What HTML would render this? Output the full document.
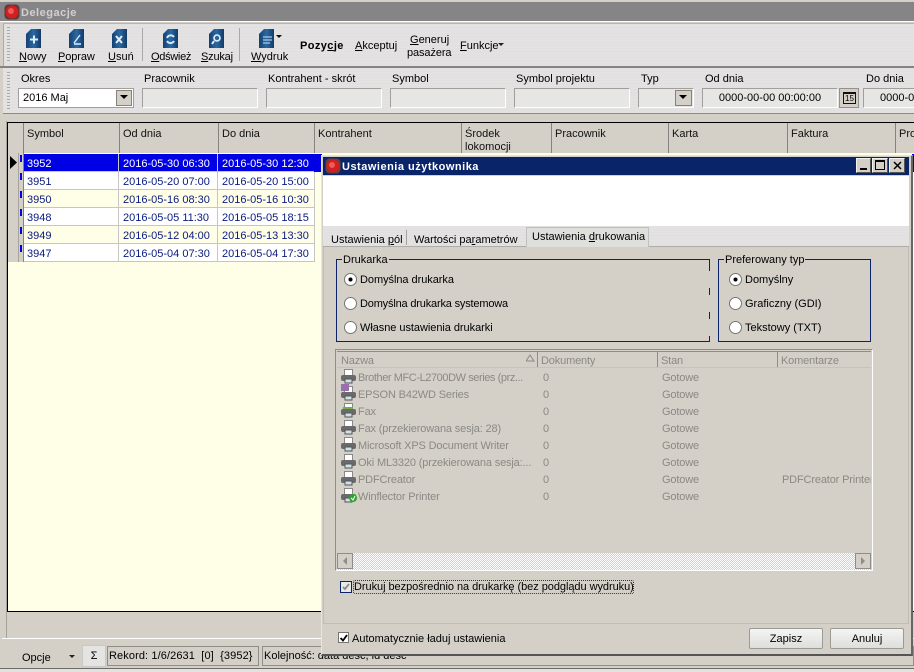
<!DOCTYPE html>
<html lang="pl"><head><meta charset="utf-8"><style>
html,body{margin:0;padding:0}
body{width:914px;height:672px;overflow:hidden;position:relative;background:#d4d0c8;font:11px/15px "Liberation Sans",sans-serif;color:#000}
div,span,svg{position:absolute;white-space:nowrap;box-sizing:border-box}
u{text-decoration:underline}
.metal{background:repeating-linear-gradient(180deg,#e6e4e4 0,#dcdadb 1px,#e9e8e8 2px,#dfdddd 3px)}
.l{font-size:11px}
.inp{height:20px;background:#e6e6e4;border:1px solid #a09f9c;border-right-color:#fff;border-bottom-color:#fff;top:88px}
.h{top:127px;color:#111}
.sep{top:123px;height:30px;width:1px;background:#858380}
.cell{height:18px;border-bottom:1px solid #c6c6c6;border-right:1px solid #c6c6c6;line-height:20px;color:#0a1a80;padding-left:4px;font-size:11px;overflow:hidden}
.rad{width:13px;height:13px;border-radius:50%;background:#fff;border:1px solid #77756f}
.rad.on:after{content:"";position:absolute;left:4px;top:4px;width:3px;height:3px;background:#000;border-radius:50%;box-shadow:0 0 0 .5px #000}
.g{color:#8b8985;letter-spacing:-.15px}
.btn{top:628px;height:21px;width:74px;border:1px solid #9a9a96;border-radius:2px;background:linear-gradient(#f4f4f2,#dededc);text-align:center;line-height:20px}
.tb{text-align:center;top:50px}
</style></head><body>
<!-- title -->
<div style="left:0;top:2px;width:914px;height:19px;background:#858487"></div>
<svg style="left:4px;top:4px" width="16" height="16"><rect x="0.500" y="0.500" width="15" height="15" rx="4" fill="#5a3a3a"/><circle cx="8" cy="8" r="6.500" fill="#d21f1f"/><circle cx="7" cy="7" r="3" fill="#ee5a5a"/></svg>
<div style="left:21px;top:6px;color:#d4d0d0;font-weight:bold;letter-spacing:.5px">Delegacje</div>
<div style="left:0;top:21px;width:914px;height:1px;background:#fff"></div>
<!-- toolbar -->
<div class="metal" style="left:3px;top:23px;width:911px;height:43px;border-top:1px solid #b5b5b3;border-left:1px solid #aaa"></div>
<div style="left:0;top:66px;width:914px;height:2px;background:#858380"></div>
<div style="left:7px;top:27px;width:3px;height:34px;background:repeating-linear-gradient(180deg,#aaa 0,#aaa 1px,transparent 1px,transparent 3px)"></div>
<svg style="left:0;top:28px" width="290" height="24">
<defs><linearGradient id="b" x1="0" x2="1" y1="0" y2="0"><stop offset="0" stop-color="#153f70"/><stop offset=".5" stop-color="#2a6aa5"/><stop offset="1" stop-color="#123a68"/></linearGradient><g id="d"><path d="M5 0H15V19H0V5Z" fill="url(#b)"/></g></defs>
<use href="#d" x="26" y="1"/><path d="M30 11.500H38M34 7.500V15.500" stroke="#dcecf8" stroke-width="2"/>
<use href="#d" x="69" y="1"/><path d="M74 15L80 7M74 16H81" stroke="#dcebf7" stroke-width="1.400" fill="none"/>
<use href="#d" x="112" y="1"/><path d="M116 8L122 15M122 8L116 15" stroke="#e6f0f8" stroke-width="2"/>
<use href="#d" x="163" y="1"/><path d="M167 10A4 4 0 0 1 174 9M174 13A4 4 0 0 1 167 13" stroke="#d5e7f5" stroke-width="2" fill="none"/>
<use href="#d" x="209" y="1"/><circle cx="217" cy="10" r="3" stroke="#e4f0f9" stroke-width="1.600" fill="none"/><path d="M214 13L212 16" stroke="#e4f0f9" stroke-width="2"/>
<use href="#d" x="259" y="1"/><path d="M263 9H272M263 12H272M263 15H270" stroke="#cfe4f5" stroke-width="1"/>
<path d="M276 7H282L279 10Z" fill="#111"/>
</svg>
<div class="tb" style="left:19px"><u>N</u>owy</div>
<div class="tb" style="left:58px;letter-spacing:-.1px"><u>P</u>opraw</div>
<div class="tb" style="left:108px"><u>U</u>suń</div>
<div class="tb" style="left:151px;letter-spacing:-.3px"><u>O</u>dśwież</div>
<div class="tb" style="left:201px;letter-spacing:-.2px"><u>S</u>zukaj</div>
<div class="tb" style="left:251px"><u>W</u>ydruk</div>
<div style="left:142px;top:28px;width:1px;height:33px;background:#a9a9a7"></div>
<div style="left:239px;top:28px;width:1px;height:33px;background:#a9a9a7"></div>
<div style="left:300px;top:39px;font-weight:bold;letter-spacing:.4px">Pozy<u>c</u>je</div>
<div style="left:355px;top:39px"><u>A</u>kceptuj</div>
<div style="left:410px;top:33px"><u>G</u>eneruj</div>
<div style="left:407px;top:46px;letter-spacing:-.1px">pasażera</div>
<div style="left:460px;top:39px"><u>F</u>unkcje</div>
<svg style="left:498px;top:43px" width="7" height="5"><path d="M0 0H6L3 3Z" fill="#222"/></svg>
<!-- filter -->
<div class="metal" style="left:3px;top:68px;width:911px;height:46px;border-bottom:1px solid #8d8b88"></div>
<div style="left:7px;top:72px;width:3px;height:38px;background:repeating-linear-gradient(180deg,#aaa 0,#aaa 1px,transparent 1px,transparent 3px)"></div>
<div class="l" style="left:21px;top:72px">Okres</div>
<div class="l" style="left:144px;top:72px">Pracownik</div>
<div class="l" style="left:268px;top:72px">Kontrahent - skrót</div>
<div class="l" style="left:392px;top:72px">Symbol</div>
<div class="l" style="left:516px;top:72px">Symbol projektu</div>
<div class="l" style="left:641px;top:72px">Typ</div>
<div class="l" style="left:705px;top:72px">Od dnia</div>
<div class="l" style="left:866px;top:72px">Do dnia</div>
<div style="left:18px;top:88px;width:116px;height:20px;background:#fff;border:1px solid #a09f9c;padding:2px 0 0 4px">2016 Maj</div>
<div style="left:116px;top:90px;width:16px;height:16px;background:#d4d0c8;border:1px solid #85827c"></div>
<svg style="left:120px;top:95px" width="9" height="6"><path d="M0 0H8L4 4Z" fill="#000"/></svg>
<div class="inp" style="left:142px;width:116px"></div>
<div class="inp" style="left:266px;width:116px"></div>
<div class="inp" style="left:390px;width:116px"></div>
<div class="inp" style="left:514px;width:116px"></div>
<div class="inp" style="left:638px;width:56px"></div>
<div style="left:675px;top:90px;width:17px;height:16px;background:#d4d0c8;border:1px solid #85827c"></div>
<svg style="left:679px;top:95px" width="9" height="6"><path d="M0 0H8L4 4Z" fill="#000"/></svg>
<div class="inp" style="left:702px;width:136px;text-align:center;line-height:19px">0000-00-00 00:00:00</div>
<div style="left:839px;top:88px;width:20px;height:20px;background:#d4d0c8;border:1px solid #95928d"></div>
<div style="left:843px;top:92px;width:13px;height:12px;border:1px solid #111;border-top-width:2px;font-size:8px;line-height:9px;text-align:center">15</div>
<div class="inp" style="left:863px;width:60px;padding-left:16px;line-height:19px">0000-0</div>
<!-- grid -->
<div style="left:6px;top:121px;width:1px;height:518px;background:#a5a29c"></div>
<div style="left:7px;top:122px;width:907px;height:490px;background:#ffffe8;border:1px solid #000;border-width:1px 0 1px 1px"></div>
<div style="left:8px;top:123px;width:906px;height:30px;background:#d4d0c8"></div>
<div class="sep" style="left:23px"></div><div class="sep" style="left:119px"></div><div class="sep" style="left:218px"></div><div class="sep" style="left:314px"></div><div class="sep" style="left:461px"></div><div class="sep" style="left:551px"></div><div class="sep" style="left:668px"></div><div class="sep" style="left:787px"></div><div class="sep" style="left:895px"></div>
<div class="h" style="left:27px">Symbol</div><div class="h" style="left:123px">Od dnia</div><div class="h" style="left:222px">Do dnia</div><div class="h" style="left:318px">Kontrahent</div><div class="h" style="left:465px">Środek</div><div class="h" style="left:465px;top:140px">lokomocji</div><div class="h" style="left:555px">Pracownik</div><div class="h" style="left:672px">Karta</div><div class="h" style="left:791px">Faktura</div><div class="h" style="left:899px">Pro</div>
<div style="left:8px;top:153px;width:16px;height:109px;background:#d4d0c8;border-right:1px solid #85827c"></div>
<svg style="left:10px;top:156px" width="8" height="13"><path d="M0 0L7 6.500L0 13Z" fill="#000"/></svg>
<div style="left:18px;top:153px;width:1px;height:109px;background:#a5a29c"></div>
<div style="left:20px;top:155px;width:2px;height:7px;background:#0000e0"></div><div style="left:20px;top:173px;width:2px;height:7px;background:#0000e0"></div><div style="left:20px;top:191px;width:2px;height:7px;background:#0000e0"></div><div style="left:20px;top:209px;width:2px;height:7px;background:#0000e0"></div><div style="left:20px;top:227px;width:2px;height:7px;background:#0000e0"></div><div style="left:20px;top:245px;width:2px;height:7px;background:#0000e0"></div>
<div class="cell" style="left:24px;top:154px;width:95px;background:#0000e6;color:#fff;padding-left:3px">3952</div><div class="cell" style="left:119px;top:154px;width:99px;background:#0000e6;color:#fff">2016-05-30 06:30</div><div class="cell" style="left:218px;top:154px;width:97px;background:#0000e6;color:#fff">2016-05-30 12:30</div>
<div class="cell" style="left:24px;top:172px;width:95px;background:#fff;padding-left:3px">3951</div><div class="cell" style="left:119px;top:172px;width:99px;background:#fff">2016-05-20 07:00</div><div class="cell" style="left:218px;top:172px;width:97px;background:#fff">2016-05-20 15:00</div>
<div class="cell" style="left:24px;top:190px;width:95px;padding-left:3px">3950</div><div class="cell" style="left:119px;top:190px;width:99px">2016-05-16 08:30</div><div class="cell" style="left:218px;top:190px;width:97px">2016-05-16 10:30</div>
<div class="cell" style="left:24px;top:208px;width:95px;background:#fff;padding-left:3px">3948</div><div class="cell" style="left:119px;top:208px;width:99px;background:#fff">2016-05-05 11:30</div><div class="cell" style="left:218px;top:208px;width:97px;background:#fff">2016-05-05 18:15</div>
<div class="cell" style="left:24px;top:226px;width:95px;padding-left:3px">3949</div><div class="cell" style="left:119px;top:226px;width:99px">2016-05-12 04:00</div><div class="cell" style="left:218px;top:226px;width:97px">2016-05-13 13:30</div>
<div class="cell" style="left:24px;top:244px;width:95px;background:#fff;padding-left:3px">3947</div><div class="cell" style="left:119px;top:244px;width:99px;background:#fff">2016-05-04 07:30</div><div class="cell" style="left:218px;top:244px;width:97px;background:#fff">2016-05-04 17:30</div>
<div style="left:314px;top:154px;width:8px;height:18px;background:#0000e6"></div>
<div style="left:912px;top:154px;width:2px;height:18px;background:#0000e6"></div>
<!-- status -->
<div style="left:2px;top:638px;width:912px;height:1px;background:#fff"></div>
<div style="left:22px;top:651px;font-size:11px">Opcje</div>
<svg style="left:69px;top:655px" width="7" height="4"><path d="M0 0H6L3 3Z" fill="#222"/></svg>
<div style="left:82px;top:645px;width:24px;height:22px;background:#e4e4e2;border:1px solid #c8c8c6;text-align:center;line-height:20px">Σ</div>
<div style="left:107px;top:646px;width:152px;height:20px;border:1px solid #8f8d89;padding-left:1px;line-height:19px;letter-spacing:.1px">Rekord: 1/6/2631&nbsp; [0]&nbsp; {3952}</div>
<div style="left:262px;top:646px;width:652px;height:20px;border:1px solid #8f8d89;padding-left:1px;line-height:19px">Kolejność: data desc, id desc</div>
<div style="left:0;top:668px;width:914px;height:1px;background:#6d6b68"></div>
<div style="left:0;top:669px;width:914px;height:3px;background:#e4e2de"></div>
<!-- dialog -->
<div style="left:321px;top:155px;width:592px;height:501px;background:#d4d0c8;border:1px solid #e6e4e0;border-right:2px solid #666;border-bottom:2px solid #555"></div>
<div style="left:323px;top:157px;width:586px;height:18px;background:#0a246a"></div>
<svg style="left:325px;top:158px" width="16" height="16"><rect x="0.500" y="0.500" width="15" height="15" rx="4" fill="#6a4040"/><circle cx="8" cy="8" r="6.500" fill="#d21f1f"/><circle cx="7" cy="7" r="3" fill="#ee5a5a"/></svg>
<div style="left:342px;top:160px;color:#fff;font-weight:bold;font-size:11px;letter-spacing:.5px">Ustawienia użytkownika</div>
<div style="left:856px;top:158px;width:15px;height:15px;background:#d4d0c8;border:1px solid #f2f2f0;border-right-color:#555;border-bottom-color:#555"><div style="left:3px;top:9px;width:7px;height:2px;background:#000"></div></div>
<div style="left:872px;top:158px;width:16px;height:15px;background:#d4d0c8;border:1px solid #f2f2f0;border-right-color:#555;border-bottom-color:#555"><div style="left:2px;top:1px;width:10px;height:10px;border:1px solid #000;border-top-width:2px"></div></div>
<div style="left:889px;top:158px;width:16px;height:15px;background:#d4d0c8;border:1px solid #f2f2f0;border-right-color:#555;border-bottom-color:#555"><svg style="left:3px;top:2px" width="9" height="9"><path d="M1 1L8 8M8 1L1 8" stroke="#000" stroke-width="1.500"/></svg></div>
<div style="left:323px;top:176px;width:586px;height:50px;background:#fff"></div>
<div class="metal" style="left:323px;top:226px;width:586px;height:20px"></div>
<div style="left:323px;top:246px;width:586px;height:1px;background:#aeaca8"></div>
<div style="left:323px;top:247px;width:586px;height:377px;border:1px solid #c0bdb7;border-top:none"></div>
<div style="left:331px;top:233px">Ustawienia <u>p</u>ól</div>
<div style="left:406px;top:230px;width:1px;height:15px;background:#a5a39f"></div>
<div style="left:414px;top:233px">Wartości pa<u>r</u>ametrów</div>
<div style="left:526px;top:227px;width:123px;height:20px;background:#dfdfdc;border:1px solid #c0c0bc;border-bottom:none;padding:2px 0 0 5px">Ustawienia <u>d</u>rukowania</div>
<!-- groups -->
<div style="left:336px;top:259px;width:374px;height:83px;border:1px solid #0a246a;border-right:none"></div>
<div style="left:709px;top:259px;width:1px;height:12px;background:#0a246a"></div><div style="left:709px;top:288px;width:1px;height:7px;background:#0a246a"></div><div style="left:709px;top:312px;width:1px;height:7px;background:#0a246a"></div><div style="left:709px;top:336px;width:1px;height:6px;background:#0a246a"></div>
<div style="left:342px;top:253px;background:#d4d0c8;padding:0 1px">Drukarka</div>
<div class="rad on" style="left:344px;top:273px"></div><div style="left:360px;top:273px;letter-spacing:-.05px">Domyślna drukarka</div>
<div class="rad" style="left:344px;top:297px"></div><div style="left:360px;top:297px;letter-spacing:-.18px">Domyślna drukarka systemowa</div>
<div class="rad" style="left:344px;top:321px"></div><div style="left:360px;top:321px;letter-spacing:-.05px">Własne ustawienia drukarki</div>
<div style="left:718px;top:259px;width:153px;height:83px;border:1px solid #0a246a"></div>
<div style="left:724px;top:253px;background:#d4d0c8;padding:0 1px">Preferowany typ</div>
<div class="rad on" style="left:729px;top:273px"></div><div style="left:745px;top:273px">Domyślny</div>
<div class="rad" style="left:729px;top:297px"></div><div style="left:745px;top:297px">Graficzny (GDI)</div>
<div class="rad" style="left:729px;top:321px"></div><div style="left:745px;top:321px">Tekstowy (TXT)</div>
<!-- list -->
<div style="left:335px;top:349px;width:538px;height:222px;border:1px solid #8f8d89;border-right:1px solid #fff;border-bottom:1px solid #fff"></div>
<div style="left:337px;top:351px;width:534px;height:1px;background:#8f8d89"></div>
<div style="left:337px;top:367px;width:534px;height:1px;background:#c5c3bd"></div>
<div style="left:537px;top:352px;width:1px;height:15px;background:#8f8d89"></div><div style="left:657px;top:352px;width:1px;height:15px;background:#8f8d89"></div><div style="left:777px;top:352px;width:1px;height:15px;background:#8f8d89"></div>
<div class="g" style="left:341px;top:354px">Nazwa</div>
<svg style="left:526px;top:354px" width="9" height="9"><path d="M4 1L8 7H0Z" fill="none" stroke="#8b8985"/></svg>
<div class="g" style="left:541px;top:354px">Dokumenty</div><div class="g" style="left:661px;top:354px">Stan</div><div class="g" style="left:781px;top:354px">Komentarze</div>
<svg style="left:340px;top:367px" width="20" height="140">
<defs><g id="p"><rect x="4.500" y="0.500" width="8" height="6" fill="#fff" stroke="#888"/><rect x="1" y="6" width="15" height="6" rx="2" fill="#6a6a6a"/><rect x="5" y="10" width="7" height="4" fill="#cfe0e8" stroke="#555"/></g></defs>
<use href="#p" y="2"/><use href="#p" y="19"/><rect x="1" y="17" width="8" height="7" fill="#9a6fb0"/><use href="#p" y="36"/><rect x="3" y="40" width="10" height="2" fill="#6cb04a"/><use href="#p" y="53"/><use href="#p" y="70"/><use href="#p" y="87"/><use href="#p" y="104"/><use href="#p" y="121"/><circle cx="13" cy="131" r="4" fill="#2da52d"/><path d="M11 131L13 133L15 129" stroke="#fff" fill="none"/>
</svg>
<div class="g" style="left:358px;top:371px;letter-spacing:-.42px">Brother MFC-L2700DW series (prz...</div><div class="g" style="left:543px;top:371px">0</div><div class="g" style="left:662px;top:371px">Gotowe</div>
<div class="g" style="left:358px;top:388px">EPSON B42WD Series</div><div class="g" style="left:543px;top:388px">0</div><div class="g" style="left:662px;top:388px">Gotowe</div>
<div class="g" style="left:358px;top:405px">Fax</div><div class="g" style="left:543px;top:405px">0</div><div class="g" style="left:662px;top:405px">Gotowe</div>
<div class="g" style="left:358px;top:422px">Fax (przekierowana sesja: 28)</div><div class="g" style="left:543px;top:422px">0</div><div class="g" style="left:662px;top:422px">Gotowe</div>
<div class="g" style="left:358px;top:439px">Microsoft XPS Document Writer</div><div class="g" style="left:543px;top:439px">0</div><div class="g" style="left:662px;top:439px">Gotowe</div>
<div class="g" style="left:358px;top:456px">Oki ML3320 (przekierowana sesja:...</div><div class="g" style="left:543px;top:456px">0</div><div class="g" style="left:662px;top:456px">Gotowe</div>
<div class="g" style="left:358px;top:473px">PDFCreator</div><div class="g" style="left:543px;top:473px">0</div><div class="g" style="left:662px;top:473px">Gotowe</div><div class="g" style="left:782px;top:473px;width:89px;overflow:hidden">PDFCreator Printer</div>
<div class="g" style="left:358px;top:490px">Winflector Printer</div><div class="g" style="left:543px;top:490px">0</div><div class="g" style="left:662px;top:490px">Gotowe</div>
<!-- hscroll -->
<div style="left:337px;top:553px;width:534px;height:17px;background:repeating-conic-gradient(#d4d0c8 0 25%,#fff 0 50%) 0 0/2px 2px"></div>
<div style="left:337px;top:553px;width:16px;height:16px;background:#d4d0c8;border:1px solid #8f8d89"></div><svg style="left:342px;top:557px" width="6" height="9"><path d="M5 0V8L1 4Z" fill="#8f8d89"/></svg>
<div style="left:855px;top:553px;width:16px;height:16px;background:#d4d0c8;border:1px solid #8f8d89"></div><svg style="left:861px;top:557px" width="6" height="9"><path d="M0 0V8L4 4Z" fill="#8f8d89"/></svg>
<!-- checks -->
<div style="left:340px;top:581px;width:12px;height:12px;background:#e8e8e6;border:1px solid #0a246a"></div>
<svg style="left:341px;top:582px" width="10" height="10"><path d="M2 5L4 7L8 2" stroke="#8b8985" stroke-width="1.800" fill="none"/></svg>
<div style="left:353px;top:580px;width:281px;height:14px;border:1px dotted #333;border-radius:2px;line-height:12px;letter-spacing:-.05px">Drukuj bezpośrednio na drukarkę (bez podglądu wydruku)</div>
<div style="left:338px;top:632px;width:11px;height:11px;background:#fff;border:1px solid #77756f"></div>
<svg style="left:339px;top:633px" width="10" height="10"><path d="M1.500 5L4 7.500L8 2" stroke="#000" stroke-width="1.800" fill="none"/></svg>
<div style="left:352px;top:632px">Automatycznie ładuj ustawienia</div>
<div class="btn" style="left:749px">Zapisz</div>
<div class="btn" style="left:830px">Anuluj</div>
</body></html>
